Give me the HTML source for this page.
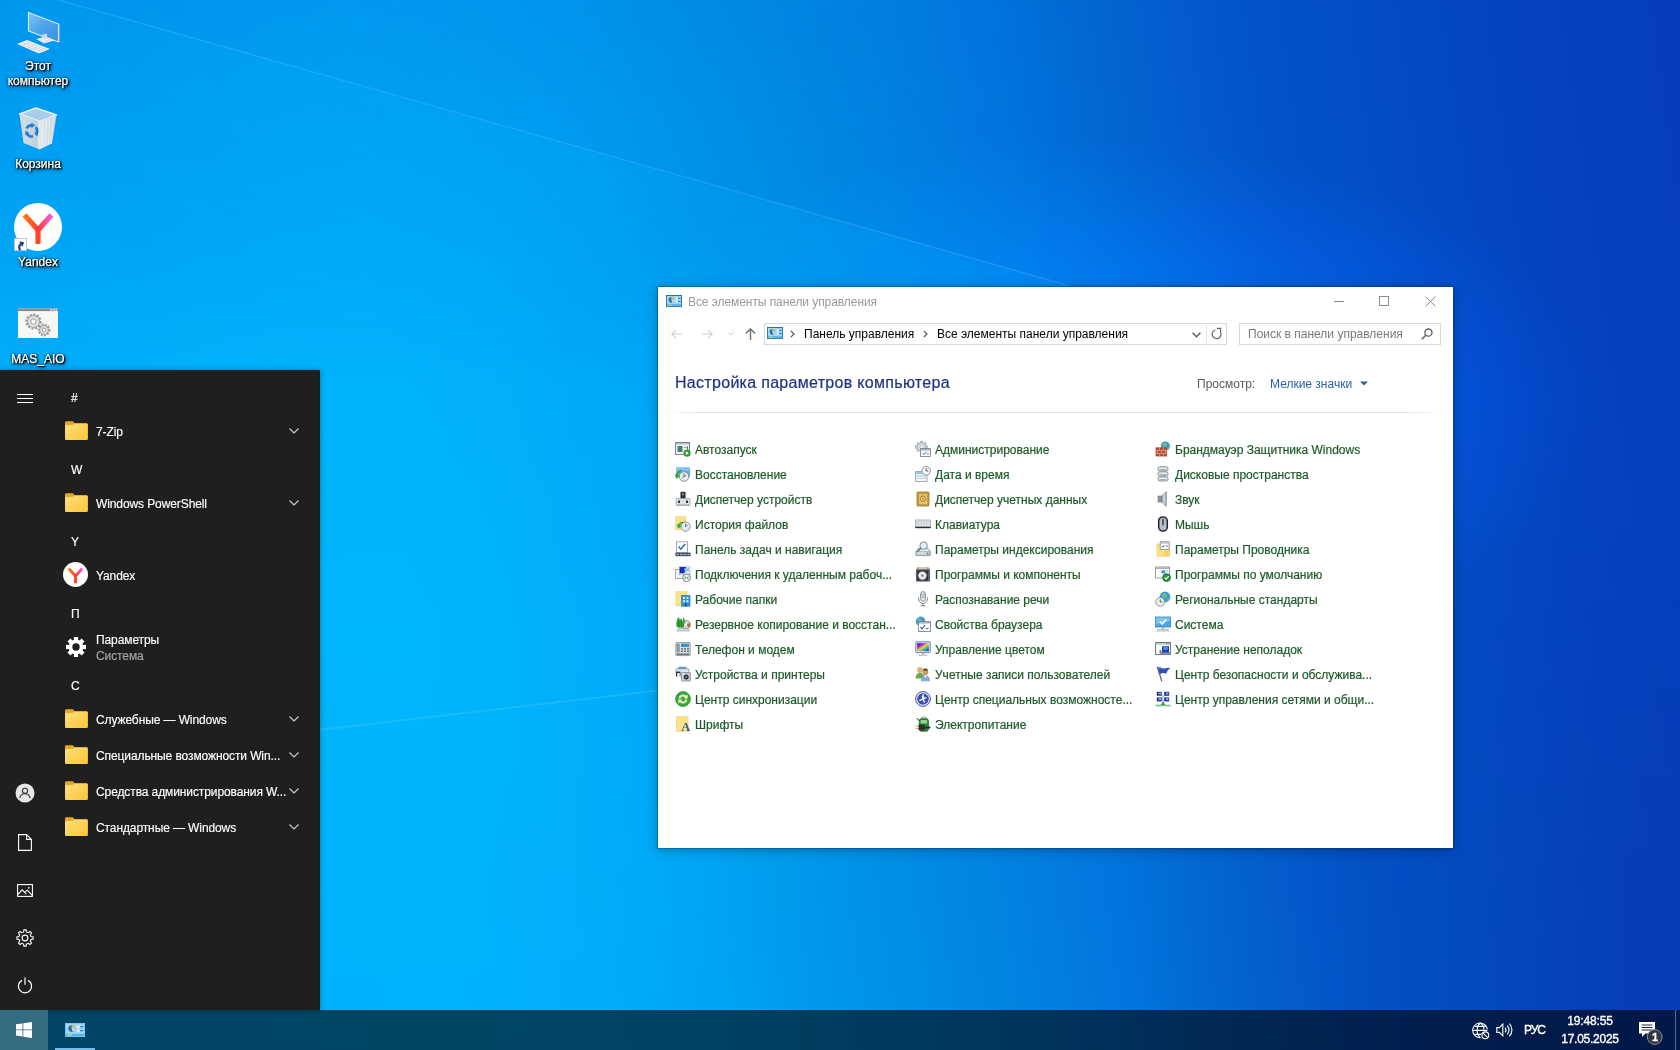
<!DOCTYPE html>
<html lang="ru">
<head>
<meta charset="utf-8">
<title>Все элементы панели управления</title>
<style>
*{box-sizing:border-box;margin:0;padding:0}
html,body{width:1680px;height:1050px;overflow:hidden}
body{position:relative;font-family:"Liberation Sans",sans-serif;font-size:12px;color:#fff;background:#0a86e4}
.abs{position:absolute}
#wall{position:absolute;left:0;top:0;width:1680px;height:1050px}
/* desktop icons */
.dlabel{position:absolute;left:0;width:76px;text-align:center;font-size:12px;line-height:15px;color:#fff;letter-spacing:0;
 -webkit-text-stroke:0.25px #fff;text-shadow:1px 1px 1px rgba(0,0,0,1),1px 1px 2px rgba(0,0,0,.95),0 0 3px rgba(0,0,0,.8),1px 2px 4px rgba(0,0,0,.7)}
/* start menu */
#start{position:absolute;left:0;top:370px;width:320px;height:640px;background:#1f1f1f;border-top:1px solid #04202f;border-right:1px solid #04202f;box-shadow:0 0 5px rgba(0,0,0,.35)}
.hdr{position:absolute;left:71px;width:30px;font-size:12px;line-height:14px;color:#fff;-webkit-text-stroke:0.15px #fff}
.app{position:absolute;left:96px;font-size:12px;line-height:14px;color:#fff;white-space:nowrap;letter-spacing:-0.1px;-webkit-text-stroke:0.15px currentColor}
.sub{color:#a6a6a6}
.fold{position:absolute;left:65px;width:23px;height:19px}
.chev{position:absolute;left:289px;width:10px;height:6px}
.rail{position:absolute}
/* taskbar */
#task{position:absolute;left:0;top:1010px;width:1680px;height:40px;background:rgba(0,0,0,.6)}
#startbtn{position:absolute;left:0;top:0;width:48px;height:40px;background:#346c82}
.tray{position:absolute;color:#fff;font-size:12px;line-height:14px;white-space:nowrap;-webkit-text-stroke:0.35px #fff}
/* window */
#win{position:absolute;left:658px;top:287px;width:795px;height:561px;background:#fff;color:#000;
 box-shadow:0 0 0 1px rgba(10,50,110,.30),0 2px 12px rgba(0,0,0,.28),0 0 4px rgba(0,0,0,.15)}
#win .t{position:absolute;white-space:nowrap;font-size:12px;line-height:14px}
.item{position:absolute;white-space:nowrap;font-size:12px;line-height:14px;color:#1e5a28;-webkit-text-stroke:0.2px #1e5a28}
.ic{position:absolute;width:16px;height:16px}
</style>
</head>
<body>
<svg id="wall" width="1680" height="1050" viewBox="0 0 1680 1050">
<defs>
<linearGradient id="wg" gradientUnits="userSpaceOnUse" x1="0" y1="0" x2="1647.2" y2="-232.3">
<stop offset="0.0000" stop-color="#00aefa"/>
<stop offset="0.0179" stop-color="#00aefa"/>
<stop offset="0.0357" stop-color="#00affa"/>
<stop offset="0.0536" stop-color="#00affa"/>
<stop offset="0.0714" stop-color="#00affa"/>
<stop offset="0.0893" stop-color="#00b0fa"/>
<stop offset="0.1071" stop-color="#00b0fb"/>
<stop offset="0.1250" stop-color="#00b0fb"/>
<stop offset="0.1429" stop-color="#00b1fb"/>
<stop offset="0.1607" stop-color="#00b1fb"/>
<stop offset="0.1786" stop-color="#00b1fb"/>
<stop offset="0.1964" stop-color="#00b1fb"/>
<stop offset="0.2143" stop-color="#00b0fb"/>
<stop offset="0.2321" stop-color="#00affa"/>
<stop offset="0.2500" stop-color="#00aefa"/>
<stop offset="0.2679" stop-color="#00adf9"/>
<stop offset="0.2857" stop-color="#00abf8"/>
<stop offset="0.3036" stop-color="#00a9f8"/>
<stop offset="0.3214" stop-color="#00a7f7"/>
<stop offset="0.3393" stop-color="#00a5f5"/>
<stop offset="0.3571" stop-color="#00a2f2"/>
<stop offset="0.3750" stop-color="#009eef"/>
<stop offset="0.3929" stop-color="#009bec"/>
<stop offset="0.4107" stop-color="#0097eb"/>
<stop offset="0.4286" stop-color="#0094e9"/>
<stop offset="0.4464" stop-color="#0091e7"/>
<stop offset="0.4643" stop-color="#008ee6"/>
<stop offset="0.4821" stop-color="#018ae4"/>
<stop offset="0.5000" stop-color="#0187e3"/>
<stop offset="0.5179" stop-color="#0184e2"/>
<stop offset="0.5357" stop-color="#0180e1"/>
<stop offset="0.5536" stop-color="#027ce0"/>
<stop offset="0.5714" stop-color="#0278df"/>
<stop offset="0.5893" stop-color="#0275dd"/>
<stop offset="0.6071" stop-color="#0270da"/>
<stop offset="0.6250" stop-color="#026cd6"/>
<stop offset="0.6429" stop-color="#0268d3"/>
<stop offset="0.6607" stop-color="#0264d1"/>
<stop offset="0.6786" stop-color="#0360cf"/>
<stop offset="0.6964" stop-color="#035cce"/>
<stop offset="0.7143" stop-color="#0358cc"/>
<stop offset="0.7321" stop-color="#0355ca"/>
<stop offset="0.7500" stop-color="#0352c8"/>
<stop offset="0.7679" stop-color="#0350c7"/>
<stop offset="0.7857" stop-color="#034fc6"/>
<stop offset="0.8036" stop-color="#044dc5"/>
<stop offset="0.8214" stop-color="#044bc4"/>
<stop offset="0.8393" stop-color="#0449c3"/>
<stop offset="0.8571" stop-color="#0447c2"/>
<stop offset="0.8750" stop-color="#0445c0"/>
<stop offset="0.8929" stop-color="#0443bf"/>
<stop offset="0.9107" stop-color="#0442be"/>
<stop offset="0.9286" stop-color="#0441bd"/>
<stop offset="0.9464" stop-color="#0440bd"/>
<stop offset="0.9643" stop-color="#043fbc"/>
<stop offset="0.9821" stop-color="#043ebb"/>
<stop offset="1.0000" stop-color="#043dba"/>
</linearGradient>
<linearGradient id="wd" gradientUnits="userSpaceOnUse" x1="0" y1="0" x2="0" y2="380">
<stop offset="0" stop-color="#0058d0" stop-opacity="0.30"/>
<stop offset="1" stop-color="#0058d0" stop-opacity="0"/>
</linearGradient>
<linearGradient id="mh" gradientUnits="userSpaceOnUse" x1="0" y1="0" x2="1068" y2="0">
<stop offset="0" stop-color="#fff"/><stop offset="0.55" stop-color="#aaa"/><stop offset="1" stop-color="#000"/>
</linearGradient>
<mask id="mwd" maskUnits="userSpaceOnUse" x="0" y="0" width="1680" height="1050"><rect width="1680" height="1050" fill="url(#mh)"/></mask>
<radialGradient id="wh" gradientUnits="userSpaceOnUse" cx="380" cy="640" r="420" gradientTransform="translate(380 640) scale(1.3 1) translate(-380 -640)">
<stop offset="0" stop-color="#00c8ff" stop-opacity="0.22"/>
<stop offset="1" stop-color="#00c8ff" stop-opacity="0"/>
</radialGradient>
<radialGradient id="wb" gradientUnits="userSpaceOnUse" cx="1680" cy="1050" r="560"><stop offset="0" stop-color="#001878" stop-opacity="0.14"/><stop offset="1" stop-color="#001878" stop-opacity="0"/></radialGradient>
<linearGradient id="wl" gradientUnits="userSpaceOnUse" x1="53" y1="0" x2="1068" y2="287">
<stop offset="0" stop-color="#30c0ff" stop-opacity="0.40"/>
<stop offset="1" stop-color="#30a8ff" stop-opacity="0.50"/>
</linearGradient>
<radialGradient id="glow" gradientUnits="userSpaceOnUse" cx="1080" cy="400" r="260" gradientTransform="translate(1080 400) scale(2 1) translate(-1080 -400)">
<stop offset="0" stop-color="#0028f0"/><stop offset="0.25" stop-color="#0020c8"/><stop offset="0.5" stop-color="#001585"/><stop offset="0.75" stop-color="#000a41"/><stop offset="1" stop-color="#000000"/>
</radialGradient>
<linearGradient id="bm" gradientUnits="userSpaceOnUse" x1="100" y1="0" x2="1068" y2="0">
<stop offset="0" stop-color="#000610"/><stop offset="1" stop-color="#001040"/>
</linearGradient>
<linearGradient id="bmm" gradientUnits="userSpaceOnUse" x1="420" y1="104" x2="363" y2="304">
<stop offset="0" stop-color="#fff"/><stop offset="1" stop-color="#000"/>
</linearGradient>
<mask id="mbm" maskUnits="userSpaceOnUse" x="0" y="0" width="1680" height="1050"><rect width="1680" height="1050" fill="url(#bmm)"/></mask>
</defs>
<rect width="1680" height="1050" fill="url(#wg)"/>
<rect width="1680" height="1050" fill="url(#wh)"/>
<rect x="1000" y="400" width="680" height="650" fill="url(#wb)"/>
<rect width="1680" height="1050" fill="url(#glow)" style="mix-blend-mode:screen"/>
<g mask="url(#mbm)" style="mix-blend-mode:screen"><polygon points="0,0 53,0 1068,287 1068,600 0,600" fill="url(#bm)"/></g>
<g mask="url(#mwd)"><rect width="1100" height="380" fill="url(#wd)"/><polygon points="0,0 53,0 1068,287 1068,0" fill="#0058d0" fill-opacity="0.045"/></g>
<path d="M53 -1.500L1068 285.500" stroke="url(#wl)" stroke-width="1.600"/>
<path d="M0 767L658 690.500" stroke="#9fe4ff" stroke-opacity="0.16" stroke-width="2"/>
</svg>
<div id="desk">
<!-- Этот компьютер -->
<svg class="abs" style="left:14px;top:8px" width="48" height="48" viewBox="0 0 48 48">
<defs><linearGradient id="scr" x1="0" y1="0" x2="1" y2="1"><stop offset="0" stop-color="#7cc4f5"/><stop offset="0.5" stop-color="#4aa3ec"/><stop offset="1" stop-color="#3b8fe0"/></linearGradient></defs>
<polygon points="14.5,4.5 44.5,16 44.5,34 14.5,23" fill="url(#scr)" stroke="#d8ecfb" stroke-width="1.2" stroke-linejoin="round"/>
<polygon points="44.5,16 45.5,16.6 45.5,34.6 44.5,34" fill="#b9c6d2"/>
<polygon points="22,31 32,28.5 41,32.5 30,35.5" fill="#e4e8ec"/>
<polygon points="27,27 33,25.5 33,29.5 28,30.5" fill="#cfd6dc"/>
<polygon points="3,36 13,32 36,41 25,45.5" fill="#eef1f4"/>
<path d="M6 36.2 L27 44 M9 35 L30 43 M12 33.8 L33 41.8 M9 37.3 L15 34.6 M14 39.2 L20 36.6 M19 41 L25 38.5 M24 43 L30 40.4" stroke="#c7d0d8" stroke-width="0.7" fill="none"/>
</svg>
<div class="dlabel" style="top:59px">Этот<br>компьютер</div>
<!-- Корзина -->
<svg class="abs" style="left:14px;top:104px" width="48" height="48" viewBox="0 0 48 48">
<defs><linearGradient id="bin" x1="0" y1="0" x2="1" y2="0"><stop offset="0" stop-color="#d3dee7"/><stop offset="0.48" stop-color="#c2cfda"/><stop offset="0.52" stop-color="#e2e9ef"/><stop offset="1" stop-color="#c9d5de"/></linearGradient></defs>
<polygon points="5.5,10 22,4 42.5,11 26,17.5" fill="#a9cde8" stroke="#e6f0f7" stroke-width="1.4" stroke-linejoin="round"/>
<polygon points="5.5,10.5 26,18 42.5,11.5 38,39.500 25.500,45.500 9.500,39" fill="url(#bin)"/>
<path d="M29 17.2L28.2 44M32.5 15.8L31.200 42.600M36 14.400L34.200 41.200M39.400 13L37 40" stroke="#fff" stroke-opacity="0.35" stroke-width="1.1"/>
<g fill="none" stroke="#1f7fd6" stroke-width="2.600">
<path d="M12.600 24.600a5.400 5.400 0 0 1 5.600 -3.200"/>
<path d="M21.800 23.200a5.400 5.400 0 0 1 0.600 6.200"/>
<path d="M19 32.400a5.400 5.400 0 0 1 -6 -3.200"/>
</g>
<g fill="#1f7fd6"><path d="M17.400 18.600l4 2.800l-4 2.400z"/><path d="M24.600 27.800l-1.200 4.600l-3.400 -3.200z"/><path d="M11 31.200l0.600 -4.800l3.800 2.600z"/></g>
</svg>
<div class="dlabel" style="top:157px">Корзина</div>
<!-- Yandex -->
<svg class="abs" style="left:14px;top:203px" width="48" height="48" viewBox="0 0 48 48">
<defs><linearGradient id="ya" x1="0" y1="0" x2="1" y2="0"><stop offset="0" stop-color="#ff7a1a"/><stop offset="0.5" stop-color="#ff3d2e"/><stop offset="1" stop-color="#ff5ad8"/></linearGradient>
<linearGradient id="yb" x1="0" y1="0" x2="0" y2="1"><stop offset="0" stop-color="#ff3a3a"/><stop offset="1" stop-color="#ff4a22"/></linearGradient></defs>
<circle cx="24" cy="24" r="24" fill="#fff"/>
<path d="M10.5 12 L24 27 L37.5 12" fill="none" stroke="url(#ya)" stroke-width="5.2" stroke-linejoin="miter"/>
<rect x="21.4" y="24" width="5.2" height="17" rx="1.2" fill="url(#yb)"/>
<rect x="0.5" y="35.5" width="12" height="12" fill="#fff" stroke="#b8c4d4" stroke-width="1"/>
<path d="M3 46.4C2.800 42.400 4.800 40.400 7.400 40.200L7.400 38L11.400 41.200L7.400 44.400L7.400 42.400C5.800 42.600 5.200 43.800 5.200 46.400z" fill="#24408f" transform="rotate(-28 7 42.500)"/>
</svg>
<div class="dlabel" style="top:255px">Yandex</div>
<!-- MAS_AIO -->
<svg class="abs" style="left:14px;top:300px" width="48" height="48" viewBox="0 0 48 48">
<rect x="4" y="8.5" width="40" height="29.5" fill="#f7f7f7"/>
<rect x="4" y="8.5" width="40" height="2.6" fill="#8c8c8c"/>
<rect x="36.3" y="9.2" width="1.6" height="1.2" fill="#fff"/><rect x="38.9" y="9.2" width="1.6" height="1.2" fill="#fff"/><rect x="41.5" y="9.2" width="1.6" height="1.2" fill="#fff"/>
<g fill="#e0e0e0" stroke="#9a9a9a" stroke-width="0.9">
<circle cx="19.5" cy="21.5" r="7" stroke-dasharray="2.2 1.4" stroke-width="2.2" fill="none"/>
<circle cx="19.5" cy="21.5" r="6" />
<circle cx="19.5" cy="21.5" r="2.6" fill="#fff"/>
<circle cx="30" cy="30" r="5.4" stroke-dasharray="1.9 1.3" stroke-width="2" fill="none"/>
<circle cx="30" cy="30" r="4.4"/>
<circle cx="30" cy="30" r="1.8" fill="#fff"/>
</g>
</svg>
<div class="dlabel" style="top:352px">MAS_AIO</div>
</div>
<div id="win">
<svg class="abs" style="left:8px;top:8px" width="16" height="12" viewBox="0 0 20 14" preserveAspectRatio="none"><rect x="0.5" y="0.5" width="19" height="13" fill="#9fd8fb" stroke="#1d5d8f" stroke-width="1"/><rect x="1" y="10.8" width="18" height="2.4" fill="#4db4ec"/><circle cx="6.6" cy="5.6" r="3.3" fill="#2a6fb8"/><path d="M6.6 5.6 L6.6 2.3 A3.3 3.3 0 0 1 9.9 5.6z" fill="#f4c430"/><path d="M6.6 5.6 L9.9 5.6 A3.3 3.3 0 0 1 8 8.6z" fill="#e8eef2"/><rect x="12.2" y="2.6" width="2.4" height="2.4" fill="#e9f6ff"/><rect x="15.2" y="3.2" width="3" height="1.2" fill="#1f6fb5"/><rect x="12.2" y="6.4" width="2.4" height="2.4" fill="#e9f6ff"/><rect x="15.2" y="7" width="3" height="1.2" fill="#1f6fb5"/><rect x="2.4" y="11.4" width="5" height="1.2" fill="#f0d060"/></svg>
<div class="t" style="left:30px;top:8px;color:#999;letter-spacing:-0.07px">Все элементы панели управления</div>
<div class="abs" style="left:676px;top:14px;width:10px;height:1px;background:#8a8a8a"></div>
<div class="abs" style="left:721px;top:9px;width:10px;height:10px;border:1px solid #8a8a8a"></div>
<svg class="abs" style="left:767px;top:9px" width="11" height="11" viewBox="0 0 11 11"><path d="M0.5 0.5L10.5 10.5M10.5 0.5L0.5 10.5" stroke="#8a8a8a" stroke-width="1"/></svg>
<svg class="abs" style="left:13px;top:42px" width="12" height="10" viewBox="0 0 12 10"><path d="M11.5 5H1M5 0.8L0.8 5L5 9.2" fill="none" stroke="#d0d0d0" stroke-width="1.2"/></svg>
<svg class="abs" style="left:43px;top:42px" width="12" height="10" viewBox="0 0 12 10"><path d="M0.5 5H11M7 0.8L11.2 5L7 9.2" fill="none" stroke="#d0d0d0" stroke-width="1.2"/></svg>
<svg class="abs" style="left:70px;top:45px" width="6" height="4" viewBox="0 0 6 4"><path d="M0.5 0.5L3 3L5.5 0.5" fill="none" stroke="#c8c8c8" stroke-width="1"/></svg>
<svg class="abs" style="left:87px;top:41px" width="11" height="12" viewBox="0 0 11 12"><path d="M5.5 12V1M0.8 5.6L5.5 0.9L10.2 5.6" fill="none" stroke="#707070" stroke-width="1.4"/></svg>
<div class="abs" style="left:106px;top:36px;width:463px;height:22px;border:1px solid #d9d9d9"></div>
<div class="abs" style="left:548px;top:36px;width:1px;height:22px;background:#e3e3e3"></div>
<svg class="abs" style="left:109px;top:40px" width="16" height="12" viewBox="0 0 20 14" preserveAspectRatio="none"><rect x="0.5" y="0.5" width="19" height="13" fill="#9fd8fb" stroke="#1d5d8f" stroke-width="1"/><rect x="1" y="10.8" width="18" height="2.4" fill="#4db4ec"/><circle cx="6.6" cy="5.6" r="3.3" fill="#2a6fb8"/><path d="M6.6 5.6 L6.6 2.3 A3.3 3.3 0 0 1 9.9 5.6z" fill="#f4c430"/><path d="M6.6 5.6 L9.9 5.6 A3.3 3.3 0 0 1 8 8.6z" fill="#e8eef2"/><rect x="12.2" y="2.6" width="2.4" height="2.4" fill="#e9f6ff"/><rect x="15.2" y="3.2" width="3" height="1.2" fill="#1f6fb5"/><rect x="12.2" y="6.4" width="2.4" height="2.4" fill="#e9f6ff"/><rect x="15.2" y="7" width="3" height="1.2" fill="#1f6fb5"/><rect x="2.4" y="11.4" width="5" height="1.2" fill="#f0d060"/></svg>
<svg class="abs" style="left:132px;top:43px" width="5" height="8" viewBox="0 0 5 8"><path d="M0.8 0.8L4 4L0.8 7.2" fill="none" stroke="#555" stroke-width="1.2"/></svg>
<div class="t" style="left:146px;top:40px;color:#000">Панель управления</div>
<svg class="abs" style="left:265px;top:43px" width="5" height="8" viewBox="0 0 5 8"><path d="M0.8 0.8L4 4L0.8 7.2" fill="none" stroke="#555" stroke-width="1.2"/></svg>
<div class="t" style="left:279px;top:40px;color:#000">Все элементы панели управления</div>
<svg class="abs" style="left:534px;top:45px" width="9" height="6" viewBox="0 0 9 6"><path d="M0.6 0.8L4.5 4.8L8.4 0.8" fill="none" stroke="#555" stroke-width="1.4"/></svg>
<svg class="abs" style="left:553px;top:40px" width="12" height="13" viewBox="0 0 12 13"><path d="M9.400 5A4.400 4.400 0 1 1 4.300 3" fill="none" stroke="#666" stroke-width="1.200"/><path d="M5.800 1.400H9.600V5.200" fill="none" stroke="#666" stroke-width="1.200"/></svg>
<div class="abs" style="left:581px;top:36px;width:202px;height:22px;border:1px solid #d9d9d9"></div>
<div class="t" style="left:590px;top:40px;color:#7a7a7a">Поиск в панели управления</div>
<svg class="abs" style="left:763px;top:41px" width="12" height="12" viewBox="0 0 12 12"><circle cx="7.4" cy="4.6" r="3.6" fill="none" stroke="#666" stroke-width="1.3"/><path d="M4.8 7.2L0.8 11.2" stroke="#666" stroke-width="1.6"/></svg>
<div class="t" style="left:17px;top:86px;color:#1e3287;font-size:16px;line-height:20px;letter-spacing:0.3px;-webkit-text-stroke:0.2px #1e3287">Настройка параметров компьютера</div>
<div class="t" style="left:539px;top:90px;color:#5a5a5a">Просмотр:</div>
<div class="t" style="left:612px;top:90px;color:#2a62a8">Мелкие значки</div>
<svg class="abs" style="left:702px;top:94px" width="8" height="5" viewBox="0 0 8 5"><path d="M0 0.4H8L4 4.6z" fill="#2a62a8"/></svg>
<div class="abs" style="left:12px;top:125px;width:772px;height:1px;background:linear-gradient(to right,#fff,#e0e5e8 3%,#e0e5e8 96%,#fff)"></div>
<svg class="ic" style="left:17px;top:154px" viewBox="0 0 16 16"><rect x="0.5" y="1.5" width="14" height="12" fill="#f4f6f7" stroke="#7b8790"/><rect x="1" y="2" width="13" height="1.6" fill="#b9c2c9"/><rect x="2.5" y="5" width="5" height="6" fill="#3f7f78"/><rect x="8.8" y="6" width="3.6" height="1" fill="#9aa5ad"/><rect x="12" y="5" width="1" height="4" fill="#6d7a83"/><circle cx="12" cy="12.2" r="3.6" fill="#2e9e2e"/><path d="M10.9 10.3L13.8 12.2L10.9 14.1z" fill="#fff"/></svg><div class="item" style="left:37px;top:156px">Автозапуск</div>
<svg class="ic" style="left:17px;top:179px" viewBox="0 0 16 16"><path d="M1 1.5h14v9.5h-3l-3 -1h-8z" fill="#5bb0ea"/><path d="M1 1.5h14v3L1 7z" fill="#7cc3f2"/><circle cx="9" cy="10.5" r="4.8" fill="#e6eaee" stroke="#7d8790" stroke-width="0.9"/><path d="M9 7.5v3l2 -1.6M9 10.5l-1.6 1.2" stroke="#4a545c" stroke-width="0.8" fill="none"/><path d="M1 8.5c0.6 -3.2 3.4 -4.8 6.2 -4.4l-1.4 2.2c-1.6 0.2 -2.6 1.4 -2.8 3.2l2 0.2l-3.2 3.2l-2.4 -4.2z" fill="#37a537"/></svg><div class="item" style="left:37px;top:181px">Восстановление</div>
<svg class="ic" style="left:17px;top:204px" viewBox="0 0 16 16"><rect x="5.5" y="0.8" width="5" height="7" fill="#2b2f33"/><rect x="7.2" y="2" width="1.6" height="2.4" fill="#8d969c"/><rect x="1" y="7.5" width="14" height="7" rx="0.8" fill="#dfe2e4" stroke="#9aa1a6" stroke-width="0.8"/><rect x="3" y="9.6" width="2" height="2.4" fill="#2b2f33"/><rect x="11" y="9.6" width="2" height="2.4" fill="#2b2f33"/><rect x="1.4" y="13" width="13.2" height="1.2" fill="#b7bdc1"/></svg><div class="item" style="left:37px;top:206px">Диспетчер устройств</div>
<svg class="ic" style="left:17px;top:229px" viewBox="0 0 16 16"><rect x="0.8" y="0.8" width="10" height="13" fill="#fbe38a" stroke="#e9c95a" stroke-width="0.6"/><circle cx="10.6" cy="10.6" r="4.6" fill="#e9edf0" stroke="#7d8790" stroke-width="0.9"/><path d="M10.6 7.6v3l2 -1.4" stroke="#4a545c" stroke-width="0.8" fill="none"/><path d="M3.6 8.2c1.2 -2.2 3.4 -2.8 5.2 -2.4l-1.2 1.8c-1.2 0 -2 0.6 -2.4 1.8l1.6 0.6l-3.6 2.4l-1.4 -4z" fill="#37a537"/></svg><div class="item" style="left:37px;top:231px">История файлов</div>
<svg class="ic" style="left:17px;top:254px" viewBox="0 0 16 16"><rect x="1.6" y="0.8" width="11" height="11" fill="#fdfdfd" stroke="#8f989f" stroke-width="0.8"/><path d="M3.6 5.6l2.2 2.6l4.4 -5.2" stroke="#2d6fb4" stroke-width="1.5" fill="none"/><rect x="0.4" y="11.6" width="15.2" height="3.6" fill="#3a4652"/><rect x="1.4" y="12.8" width="2.6" height="1.4" fill="#9fb3c6"/><rect x="5" y="12.8" width="2.6" height="1.4" fill="#9fb3c6"/><rect x="8.6" y="12.8" width="2.6" height="1.4" fill="#9fb3c6"/><rect x="12.2" y="12.8" width="2.6" height="1.4" fill="#9fb3c6"/></svg><div class="item" style="left:37px;top:256px">Панель задач и навигация</div>
<svg class="ic" style="left:17px;top:279px" viewBox="0 0 16 16"><rect x="0.6" y="3.4" width="9" height="9" fill="#f1f4f6" stroke="#8f989f" stroke-width="0.8"/><rect x="4.4" y="0.8" width="10.6" height="8" fill="#dbe8f3" stroke="#9fb0bf" stroke-width="0.6"/><path d="M4.6 1h6.4v3.6l-2 2.6h-4.4z" fill="#1b2fb0"/><rect x="9.4" y="2.2" width="4.6" height="3" fill="#8cc0ef"/><circle cx="11.6" cy="11.8" r="3.9" fill="#eef1f3" stroke="#6f7a83" stroke-width="0.9"/><path d="M9.6 10.6l1.6 1.2l-1.6 1.2M13.6 10.6l-1.6 1.2l1.6 1.2" stroke="#2e9e2e" stroke-width="0.9" fill="none"/></svg><div class="item" style="left:37px;top:281px">Подключения к удаленным рабоч...</div>
<svg class="ic" style="left:17px;top:304px" viewBox="0 0 16 16"><rect x="1" y="0.8" width="11" height="14" fill="#fbe38a" stroke="#e9c95a" stroke-width="0.6"/><rect x="6.6" y="4.6" width="8.4" height="10.6" fill="#2f93d6" stroke="#1f6fa8" stroke-width="0.6"/><rect x="8" y="6" width="2" height="2" fill="#d9f0ff"/><rect x="11.4" y="6" width="2" height="2" fill="#d9f0ff"/><rect x="8" y="9.2" width="2" height="2" fill="#d9f0ff"/><rect x="11.4" y="9.2" width="2" height="2" fill="#d9f0ff"/><rect x="9.8" y="12.4" width="2" height="2.8" fill="#17507c"/></svg><div class="item" style="left:37px;top:306px">Рабочие папки</div>
<svg class="ic" style="left:17px;top:329px" viewBox="0 0 16 16"><path d="M3.4 12.4h9.6l1.6 2.6h-12.6z" fill="#d7dbde" stroke="#8c959b" stroke-width="0.6"/><circle cx="11" cy="8.6" r="4.4" fill="#cfd4d8" stroke="#7f8990" stroke-width="0.7"/><path d="M11 8.6L15 7A4.4 4.4 0 0 1 14 11.8z" fill="#b56a3c"/><circle cx="11" cy="8.6" r="1.1" fill="#fff"/><path d="M1.2 9.6c0 -4 1 -6.600 2.200 -8.800l1.600 3.200l1 -2l1.400 3.400l1.200 -4.400l1.400 4.200c-0.400 2.400 -1 4.200 -1.400 6.400h-6z" fill="#3aa03a"/><path d="M3.400 4.200l0.800 7M6.400 4l0.200 7.400" stroke="#1f7a1f" stroke-width="0.9"/></svg><div class="item" style="left:37px;top:331px">Резервное копирование и восстан...</div>
<svg class="ic" style="left:17px;top:354px" viewBox="0 0 16 16"><rect x="0.8" y="1.6" width="14.4" height="13" rx="1" fill="#dfe3e6" stroke="#7f8990" stroke-width="0.8"/><rect x="1.6" y="2.4" width="3.2" height="9" rx="1" fill="#8d979e"/><rect x="6" y="2.6" width="8" height="3.4" fill="#3f8fc4"/><g fill="#5a646b"><rect x="6" y="7.2" width="2" height="1.4"/><rect x="9" y="7.2" width="2" height="1.4"/><rect x="12" y="7.2" width="2" height="1.4"/><rect x="6" y="9.6" width="2" height="1.4"/><rect x="9" y="9.6" width="2" height="1.4"/><rect x="12" y="9.6" width="2" height="1.4"/></g><rect x="1.6" y="12.4" width="12.800" height="1.6" fill="#6d777e"/></svg><div class="item" style="left:37px;top:356px">Телефон и модем</div>
<svg class="ic" style="left:17px;top:379px" viewBox="0 0 16 16"><rect x="3.4" y="0.8" width="8" height="3" fill="#4a9ad4"/><rect x="1" y="2.8" width="13" height="5" rx="0.6" fill="#e4e7e9" stroke="#7f8990" stroke-width="0.7"/><rect x="1" y="5.6" width="4.4" height="5" fill="#2b2f33"/><rect x="2.2" y="7" width="2.6" height="4.4" fill="#f1f3f4"/><rect x="6.4" y="6.6" width="9" height="8.400" rx="0.6" fill="#c9ced2" stroke="#6f7a83" stroke-width="0.7"/><circle cx="11.2" cy="11" r="2.5" fill="#2b2f33"/><circle cx="11.2" cy="11" r="1" fill="#8d979e"/><rect x="7.4" y="7.4" width="2" height="1.2" fill="#fff"/></svg><div class="item" style="left:37px;top:381px">Устройства и принтеры</div>
<svg class="ic" style="left:17px;top:404px" viewBox="0 0 16 16"><circle cx="8" cy="8" r="7.4" fill="#3aa83a"/><circle cx="8" cy="8" r="7.4" fill="none" stroke="#2a8a2a" stroke-width="0.8"/><path d="M3.6 7.400a4.500 4.500 0 0 1 7.600 -2.600l1.400 -1.200v4h-4l1.400 -1.400a2.800 2.800 0 0 0 -4.600 1.200z" fill="#f5f7c8"/><path d="M12.400 8.600a4.500 4.500 0 0 1 -7.600 2.600l-1.400 1.200v-4h4l-1.400 1.400a2.800 2.800 0 0 0 4.600 -1.200z" fill="#f5f7c8"/></svg><div class="item" style="left:37px;top:406px">Центр синхронизации</div>
<svg class="ic" style="left:17px;top:429px" viewBox="0 0 16 16"><rect x="1.6" y="0.8" width="11.4" height="14.4" fill="#fbe38a" stroke="#e9c95a" stroke-width="0.6"/><text x="6.200" y="15.400" font-family="Liberation Serif,serif" font-size="12.500" font-weight="bold" fill="#1f5f8c">A</text></svg><div class="item" style="left:37px;top:431px">Шрифты</div>
<svg class="ic" style="left:257px;top:154px" viewBox="0 0 16 16"><g transform="translate(6.600 6)"><g fill="#c9ced2" stroke="#8f989f" stroke-width="0.5"><rect x="-1.2" y="-6" width="2.4" height="3" transform="rotate(0)"/><rect x="-1.2" y="-6" width="2.4" height="3" transform="rotate(45)"/><rect x="-1.2" y="-6" width="2.4" height="3" transform="rotate(90)"/><rect x="-1.2" y="-6" width="2.4" height="3" transform="rotate(135)"/><rect x="-1.2" y="-6" width="2.4" height="3" transform="rotate(180)"/><rect x="-1.2" y="-6" width="2.4" height="3" transform="rotate(225)"/><rect x="-1.2" y="-6" width="2.4" height="3" transform="rotate(270)"/><rect x="-1.2" y="-6" width="2.4" height="3" transform="rotate(315)"/></g><circle r="4.2" fill="#dde1e4" stroke="#8f989f" stroke-width="0.6"/><circle r="1.600" fill="#fff" stroke="#8f989f" stroke-width="0.5"/></g><rect x="5.400" y="7.600" width="10" height="7.800" fill="#fbfcfc" stroke="#6f7a83" stroke-width="0.8"/><rect x="5.800" y="8" width="9.200" height="1.600" fill="#aab3ba"/><path d="M7.600 12l1.400 1.400l2.400 -2.600" stroke="#2d6fb4" stroke-width="1" fill="none"/><rect x="12" y="12.600" width="2" height="0.800" fill="#2d6fb4"/></svg><div class="item" style="left:277px;top:156px">Администрирование</div>
<svg class="ic" style="left:257px;top:179px" viewBox="0 0 16 16"><rect x="0.600" y="5.600" width="11.400" height="9.800" fill="#f6f8f9" stroke="#8f989f" stroke-width="0.8"/><rect x="1" y="6" width="10.600" height="2.200" fill="#9fc4e4"/><g fill="#a8c8e2"><rect x="2" y="9.200" width="1.600" height="1.400"/><rect x="4.400" y="9.200" width="1.600" height="1.400"/><rect x="6.800" y="9.200" width="1.600" height="1.400"/><rect x="9.200" y="9.200" width="1.600" height="1.400"/><rect x="2" y="11.600" width="1.600" height="1.400"/><rect x="4.400" y="11.600" width="1.600" height="1.400"/><rect x="6.800" y="11.600" width="1.600" height="1.400"/><rect x="9.200" y="11.600" width="1.600" height="1.400"/></g><circle cx="11.200" cy="4.800" r="4.300" fill="#f3f5f6" stroke="#7f8990" stroke-width="0.9"/><path d="M11.200 2.200v2.800h2.200" stroke="#4a545c" stroke-width="0.9" fill="none"/></svg><div class="item" style="left:277px;top:181px">Дата и время</div>
<svg class="ic" style="left:257px;top:204px" viewBox="0 0 16 16"><rect x="2" y="1" width="12" height="14" rx="0.800" fill="#c9a040" stroke="#9a7624" stroke-width="0.8"/><rect x="3.400" y="2.400" width="9.200" height="11.200" fill="#e2bf62" stroke="#b08a30" stroke-width="0.5"/><circle cx="8" cy="7.600" r="2.600" fill="#f0d88e" stroke="#8a6a20" stroke-width="0.8"/><circle cx="8" cy="7.600" r="0.900" fill="#8a6a20"/><rect x="10.800" y="11.400" width="1.200" height="1.200" fill="#f6e6a8"/></svg><div class="item" style="left:277px;top:206px">Диспетчер учетных данных</div>
<svg class="ic" style="left:257px;top:229px" viewBox="0 0 16 16"><rect x="0.400" y="4" width="15.200" height="7.600" fill="#eceff1" stroke="#8f989f" stroke-width="0.7"/><g stroke="#9aa3aa" stroke-width="0.7"><path d="M1.400 5.600h13.200M1.400 7.200h13.200M1.400 8.800h13.200" stroke-dasharray="1 0.600"/></g><rect x="0.400" y="10.600" width="15.200" height="1.600" fill="#2b2f33"/></svg><div class="item" style="left:277px;top:231px">Клавиатура</div>
<svg class="ic" style="left:257px;top:254px" viewBox="0 0 16 16"><path d="M1 10.200l2.600 -3h9l2.600 3v4.400h-14.200z" fill="#e4e7e9" stroke="#6f7a83" stroke-width="0.8"/><rect x="1.400" y="10.600" width="13.200" height="3.600" fill="#d3d8dc" stroke="#8f989f" stroke-width="0.5"/><rect x="11.600" y="11.800" width="1.800" height="1.400" fill="#4a7a3a"/><circle cx="8.600" cy="4.600" r="3.700" fill="#dfeefa" stroke="#7f8c98" stroke-width="1"/><path d="M5.800 7.200l-3.400 3.600" stroke="#6f7a83" stroke-width="1.600"/></svg><div class="item" style="left:277px;top:256px">Параметры индексирования</div>
<svg class="ic" style="left:257px;top:279px" viewBox="0 0 16 16"><path d="M2.400 1h11l1.600 2.400v12h-14v-12z" fill="#b9a48c"/><rect x="4" y="1" width="8" height="2.400" fill="#d8c8b2"/><rect x="1" y="3.400" width="14" height="12" fill="#5a6067"/><rect x="2" y="4.400" width="11" height="10.200" fill="#33383d"/><circle cx="7.400" cy="9.600" r="4.200" fill="#e6e9eb"/><circle cx="7.400" cy="9.600" r="1.200" fill="#6f7a83"/></svg><div class="item" style="left:277px;top:281px">Программы и компоненты</div>
<svg class="ic" style="left:257px;top:304px" viewBox="0 0 16 16"><rect x="5.600" y="0.600" width="4.800" height="9.600" rx="2.400" fill="#e9ecee" stroke="#6f7a83" stroke-width="0.8"/><path d="M5.800 3.200h4.400M5.800 4.800h4.400M5.800 6.400h4.400" stroke="#8f989f" stroke-width="0.7"/><path d="M3.600 6.400v1.600a4.400 4.400 0 0 0 8.800 0v-1.600" fill="none" stroke="#6f7a83" stroke-width="0.9"/><path d="M8 12.400v2M5.600 14.800h4.800" stroke="#6f7a83" stroke-width="1"/></svg><div class="item" style="left:277px;top:306px">Распознавание речи</div>
<svg class="ic" style="left:257px;top:329px" viewBox="0 0 16 16"><circle cx="5.600" cy="5.400" r="4.800" fill="#3f9ad8"/><path d="M2.400 3.200c1.400 -1.600 3 -1 3.600 0.200c0.600 1.400 -1 2.400 -2.200 2.200z" fill="#6cc46c"/><path d="M5.600 0.600a4.800 4.800 0 0 0 -4 2.200" stroke="#bfe2f8" stroke-width="0.8" fill="none"/><rect x="3.400" y="5.600" width="12" height="9.800" fill="#fbfcfc" stroke="#6f7a83" stroke-width="0.8"/><rect x="3.800" y="6" width="11.200" height="1.600" fill="#aab3ba"/><path d="M5.400 11l1.600 1.800l3 -3.400" stroke="#2d5fb4" stroke-width="1.100" fill="none"/><rect x="11" y="12" width="2.600" height="0.900" fill="#2d5fb4"/></svg><div class="item" style="left:277px;top:331px">Свойства браузера</div>
<svg class="ic" style="left:257px;top:354px" viewBox="0 0 16 16"><defs><linearGradient id="cm" x1="0" y1="0" x2="1" y2="1"><stop offset="0" stop-color="#2818a8"/><stop offset="0.300" stop-color="#a030c0"/><stop offset="0.500" stop-color="#f0d040"/><stop offset="0.700" stop-color="#40b8a0"/><stop offset="1" stop-color="#1828a0"/></linearGradient></defs><rect x="0.800" y="0.800" width="14.400" height="10.800" rx="0.600" fill="#dfe3f2" stroke="#5a5fb0" stroke-width="0.8"/><rect x="2.200" y="2.200" width="11.600" height="8" fill="url(#cm)"/><rect x="6.600" y="11.600" width="2.800" height="2" fill="#aab3ba"/><rect x="3.600" y="13.600" width="8.800" height="1.400" rx="0.600" fill="#c3c9ce"/></svg><div class="item" style="left:277px;top:356px">Управление цветом</div>
<svg class="ic" style="left:257px;top:379px" viewBox="0 0 16 16"><circle cx="5" cy="4" r="2.900" fill="#d9b478"/><path d="M0.600 12.400c0 -3.600 1.800 -5.400 4.400 -5.400s4.400 1.800 4.400 5.400z" fill="#6aa84a"/><circle cx="10.400" cy="6.200" r="2.900" fill="#c89a68"/><path d="M8 3.600c1 -1.400 4 -1.400 4.800 0.200l-0.400 1.200c-1.400 -0.800 -3 -0.800 -4 -0.200z" fill="#5a3a20"/><path d="M5.800 15.200c0 -3.800 2 -5.600 4.600 -5.600s4.600 1.800 4.600 5.600z" fill="#8aa8d0"/><path d="M9.400 10l1 2l1 -2z" fill="#fff"/></svg><div class="item" style="left:277px;top:381px">Учетные записи пользователей</div>
<svg class="ic" style="left:257px;top:404px" viewBox="0 0 16 16"><circle cx="8" cy="8" r="7.400" fill="#e8eaf6" stroke="#4a54a8" stroke-width="1"/><circle cx="8" cy="8" r="5.800" fill="#3f4fb0"/><path d="M8 3.200v4.400M8 7.800l3.400 -1.200M8 7.800l-3.600 1.800M8 7.800l1.600 3.600" stroke="#fff" stroke-width="1.300" fill="none"/><path d="M6.400 5.400L8 7.400L9.600 5.400z" fill="#fff"/></svg><div class="item" style="left:277px;top:406px">Центр специальных возможносте...</div>
<svg class="ic" style="left:257px;top:429px" viewBox="0 0 16 16"><rect x="6.200" y="1" width="5" height="2.400" rx="1" fill="#e9ecee" stroke="#6f7a83" stroke-width="0.6"/><rect x="4.400" y="2.800" width="9" height="12.400" rx="2" fill="#2e8f2e" stroke="#1d5f1d" stroke-width="0.8"/><rect x="5.600" y="4" width="6.600" height="3.400" rx="1" fill="#8fd48f"/><path d="M1.600 2l3 3" stroke="#2b2f33" stroke-width="1"/><rect x="0.600" y="9.600" width="3.400" height="1" fill="#d9b040"/><rect x="0.600" y="12" width="3.400" height="1" fill="#d9b040"/><path d="M3.600 8.600h4.200a2.800 2.800 0 0 1 0 5.600h-4.200z" fill="#2b2f33"/><rect x="10.600" y="10.400" width="5" height="2.200" rx="1" fill="#2b2f33"/></svg><div class="item" style="left:277px;top:431px">Электропитание</div>
<svg class="ic" style="left:497px;top:154px" viewBox="0 0 16 16"><circle cx="10.400" cy="5" r="4.600" fill="#3f9ad8"/><path d="M7.600 3.200c1.600 -2 3.600 -1.200 4.200 0c0.600 1.600 -1.200 3 -2.800 2.600z" fill="#6cc46c"/><path d="M12.600 6.400c1 -0.400 2 0.400 1.600 1.600l-1.400 0.800z" fill="#6cc46c"/><rect x="0.600" y="6.400" width="11.400" height="9" fill="#b5452c"/><g stroke="#e8c4a8" stroke-width="0.6"><path d="M0.600 9.400h11.400M0.600 12.400h11.400M4.400 6.400v3M8.400 6.400v3M2.400 9.400v3M6.400 9.400v3M10.400 9.400v3M4.400 12.400v3M8.400 12.400v3"/></g></svg><div class="item" style="left:517px;top:156px">Брандмауэр Защитника Windows</div>
<svg class="ic" style="left:497px;top:179px" viewBox="0 0 16 16"><g fill="#e6e9eb" stroke="#6f7a83" stroke-width="0.8"><rect x="3" y="0.800" width="10" height="4.200" rx="1.800"/><rect x="3" y="5.800" width="10" height="4.200" rx="1.800"/><rect x="3" y="10.800" width="10" height="4.200" rx="1.800"/></g><g fill="#9aa3aa"><rect x="4.600" y="3.200" width="6.800" height="1"/><rect x="4.600" y="8.200" width="6.800" height="1"/><rect x="4.600" y="13.200" width="6.800" height="1"/></g></svg><div class="item" style="left:517px;top:181px">Дисковые пространства</div>
<svg class="ic" style="left:497px;top:204px" viewBox="0 0 16 16"><defs><linearGradient id="sp" x1="0" y1="0" x2="1" y2="0"><stop offset="0" stop-color="#6f7a83"/><stop offset="0.500" stop-color="#dfe3e6"/><stop offset="1" stop-color="#8f989f"/></linearGradient></defs><rect x="3" y="5" width="3.400" height="6" fill="#8f989f" stroke="#5a646b" stroke-width="0.5"/><path d="M6.400 5l5 -4.400v14.800l-5 -4.400z" fill="url(#sp)" stroke="#6f7a83" stroke-width="0.5"/></svg><div class="item" style="left:517px;top:206px">Звук</div>
<svg class="ic" style="left:497px;top:229px" viewBox="0 0 16 16"><rect x="3.600" y="0.800" width="8.800" height="14.400" rx="4.200" fill="#8f9ba8" stroke="#1f2328" stroke-width="1.300"/><rect x="5" y="2.200" width="6" height="11.600" rx="3" fill="#b7c2cd"/><rect x="7.300" y="3" width="1.400" height="6.400" rx="0.600" fill="#2b3138"/></svg><div class="item" style="left:517px;top:231px">Мышь</div>
<svg class="ic" style="left:497px;top:254px" viewBox="0 0 16 16"><rect x="2" y="3" width="12.600" height="12.200" fill="#fbdf80" stroke="#e9c95a" stroke-width="0.6"/><rect x="9.400" y="9.800" width="5.200" height="5.400" fill="#f6d060"/><rect x="5.200" y="0.800" width="9" height="7.600" fill="#fbfcfc" stroke="#7f8990" stroke-width="0.8"/><rect x="5.600" y="1.200" width="8.200" height="1.300" fill="#aab3ba"/><path d="M6.800 5l1 1.200l1.800 -2" stroke="#2d5fb4" stroke-width="0.9" fill="none"/><rect x="10.600" y="4.600" width="2.400" height="0.800" fill="#2d5fb4"/></svg><div class="item" style="left:517px;top:256px">Параметры Проводника</div>
<svg class="ic" style="left:497px;top:279px" viewBox="0 0 16 16"><rect x="0.600" y="1" width="14" height="11" fill="#fbfcfc" stroke="#7f8990" stroke-width="0.8"/><rect x="1" y="1.400" width="13.200" height="1.600" fill="#aab3ba"/><rect x="6.400" y="4.400" width="4" height="3" fill="#3f8fd4"/><rect x="11.200" y="4.600" width="2" height="0.800" fill="#9aa3aa"/><circle cx="11.600" cy="11.600" r="3.900" fill="#1f9a3a" stroke="#1d5f2a" stroke-width="0.8"/><path d="M9.600 11.600l1.500 1.600l2.600 -3" stroke="#fff" stroke-width="1.200" fill="none"/></svg><div class="item" style="left:517px;top:281px">Программы по умолчанию</div>
<svg class="ic" style="left:497px;top:304px" viewBox="0 0 16 16"><circle cx="10" cy="6" r="5.400" fill="#3f9ad8"/><path d="M6.800 4c1.600 -2.400 4.200 -1.600 4.800 0c0.600 1.800 -1.400 3.200 -3.200 2.800z" fill="#6cc46c"/><path d="M12.400 7.200c1.200 -0.400 2.200 0.400 1.800 1.800l-1.600 1z" fill="#6cc46c"/><circle cx="5.200" cy="10.800" r="4.400" fill="#eef0f2" stroke="#7f8990" stroke-width="0.9"/><path d="M5.200 8.200v2.800h2.200" stroke="#4a545c" stroke-width="0.9" fill="none"/></svg><div class="item" style="left:517px;top:306px">Региональные стандарты</div>
<svg class="ic" style="left:497px;top:329px" viewBox="0 0 16 16"><rect x="0.600" y="1" width="14.800" height="10" fill="#4aa8ea" stroke="#2d7fc4" stroke-width="0.8"/><path d="M1 1.400h14v3.600l-14 3z" fill="#7cc4f4"/><path d="M5 5.600l2.200 2.400l4 -4.600" stroke="#fff" stroke-width="1.500" fill="none"/><rect x="6.800" y="11" width="2.400" height="2.200" fill="#aab3ba"/><rect x="2" y="13.400" width="12" height="1" fill="#8f989f"/><rect x="0.600" y="15" width="14.800" height="0.600" fill="#c3c9ce"/></svg><div class="item" style="left:517px;top:331px">Система</div>
<svg class="ic" style="left:497px;top:354px" viewBox="0 0 16 16"><rect x="0.600" y="1.600" width="14.800" height="12" fill="#fbfcfc" stroke="#5a646b" stroke-width="0.9"/><rect x="1" y="2" width="14" height="1.800" fill="#c3c9ce"/><rect x="11" y="2.400" width="1" height="0.800" fill="#5a646b"/><rect x="12.600" y="2.400" width="1" height="0.800" fill="#5a646b"/><rect x="4.600" y="9" width="1.600" height="3.600" fill="#6f7a83"/><rect x="7" y="5.200" width="7" height="6" fill="#1f3fb0"/><rect x="8.400" y="6" width="4.200" height="3" fill="#5a8fe0"/><rect x="6.200" y="11.200" width="8.600" height="1.400" fill="#3a4a8a"/></svg><div class="item" style="left:517px;top:356px">Устранение неполадок</div>
<svg class="ic" style="left:497px;top:379px" viewBox="0 0 16 16"><path d="M2.200 0.800l4.600 14.400" stroke="#5a646b" stroke-width="1.200"/><path d="M2.800 1.600c3 -1.400 4.600 1 7 0.800c2 -0.200 3.600 -1 5.400 -0.200c-2 1.200 -3.400 3.200 -4 5.600c-2 -1 -4.400 -1 -6.200 0.600z" fill="#2f4fb0"/><path d="M3.200 2.200c2.400 -0.800 4 0.800 6 0.800" stroke="#7f9fe4" stroke-width="0.8" fill="none"/></svg><div class="item" style="left:517px;top:381px">Центр безопасности и обслужива...</div>
<svg class="ic" style="left:497px;top:404px" viewBox="0 0 16 16"><g fill="#1f2fa8"><rect x="1.800" y="0.800" width="5" height="4"/><rect x="9.200" y="0.800" width="5" height="4"/><rect x="1.800" y="6.400" width="5" height="4"/><rect x="9.200" y="6.400" width="5" height="4"/></g><g fill="#8fb4f0"><rect x="3.600" y="1.600" width="2.400" height="1.800"/><rect x="11" y="1.600" width="2.400" height="1.800"/><rect x="3.600" y="7.200" width="2.400" height="1.800"/><rect x="11" y="7.200" width="2.400" height="1.800"/></g><path d="M8 4v9" stroke="#6f7a83" stroke-width="0.8"/><path d="M5.600 14l2.400 -3.400l2.400 3.400z" fill="#2e9e4e"/><rect x="0.600" y="13.800" width="14.800" height="1.400" fill="#2e9e4e"/><rect x="0.600" y="14.200" width="14.800" height="0.500" fill="#bfe8c8"/></svg><div class="item" style="left:517px;top:406px">Центр управления сетями и общи...</div>
</div>
<div id="start">
<div class="hdr" style="top:20px">#</div>
<div class="hdr" style="top:92px">W</div>
<div class="hdr" style="top:164px">Y</div>
<div class="hdr" style="top:236px">П</div>
<div class="hdr" style="top:308px">С</div>
<svg class="fold" style="top:50px" viewBox="0 0 23 19"><defs><linearGradient id="fg0" x1="0" y1="0" x2="1" y2="1"><stop offset="0" stop-color="#ffe082"/><stop offset="1" stop-color="#fcc434"/></linearGradient></defs><path d="M1.2 0.3h6.6l2.4 2.5h11.2a1.3 1.3 0 0 1 1.3 1.3v13.3a1.3 1.3 0 0 1 -1.3 1.3h-20.2a1.3 1.3 0 0 1 -1.2 -1.3v-15.8a1.3 1.3 0 0 1 1.2 -1.3z" fill="#e8a91e"/><path d="M0 5.2a1.3 1.3 0 0 1 1.3 -1.3h6.4l2.3 -1.6h11.5a1.3 1.3 0 0 1 1.3 1.3v14.1a1.3 1.3 0 0 1 -1.3 1.3h-20.2a1.3 1.3 0 0 1 -1.3 -1.3z" fill="url(#fg0)"/></svg>
<div class="app" style="top:54px">7-Zip</div>
<svg class="chev" style="top:57px" viewBox="0 0 10 6"><path d="M0.5 0.5 L5 5 L9.5 0.5" fill="none" stroke="#d0d0d0" stroke-width="1.1"/></svg>
<svg class="fold" style="top:122px" viewBox="0 0 23 19"><defs><linearGradient id="fg1" x1="0" y1="0" x2="1" y2="1"><stop offset="0" stop-color="#ffe082"/><stop offset="1" stop-color="#fcc434"/></linearGradient></defs><path d="M1.2 0.3h6.6l2.4 2.5h11.2a1.3 1.3 0 0 1 1.3 1.3v13.3a1.3 1.3 0 0 1 -1.3 1.3h-20.2a1.3 1.3 0 0 1 -1.2 -1.3v-15.8a1.3 1.3 0 0 1 1.2 -1.3z" fill="#e8a91e"/><path d="M0 5.2a1.3 1.3 0 0 1 1.3 -1.3h6.4l2.3 -1.6h11.5a1.3 1.3 0 0 1 1.3 1.3v14.1a1.3 1.3 0 0 1 -1.3 1.3h-20.2a1.3 1.3 0 0 1 -1.3 -1.3z" fill="url(#fg1)"/></svg>
<div class="app" style="top:126px">Windows PowerShell</div>
<svg class="chev" style="top:129px" viewBox="0 0 10 6"><path d="M0.5 0.5 L5 5 L9.5 0.5" fill="none" stroke="#d0d0d0" stroke-width="1.1"/></svg>
<svg class="fold" style="top:338px" viewBox="0 0 23 19"><defs><linearGradient id="fg2" x1="0" y1="0" x2="1" y2="1"><stop offset="0" stop-color="#ffe082"/><stop offset="1" stop-color="#fcc434"/></linearGradient></defs><path d="M1.2 0.3h6.6l2.4 2.5h11.2a1.3 1.3 0 0 1 1.3 1.3v13.3a1.3 1.3 0 0 1 -1.3 1.3h-20.2a1.3 1.3 0 0 1 -1.2 -1.3v-15.8a1.3 1.3 0 0 1 1.2 -1.3z" fill="#e8a91e"/><path d="M0 5.2a1.3 1.3 0 0 1 1.3 -1.3h6.4l2.3 -1.6h11.5a1.3 1.3 0 0 1 1.3 1.3v14.1a1.3 1.3 0 0 1 -1.3 1.3h-20.2a1.3 1.3 0 0 1 -1.3 -1.3z" fill="url(#fg2)"/></svg>
<div class="app" style="top:342px">Служебные — Windows</div>
<svg class="chev" style="top:345px" viewBox="0 0 10 6"><path d="M0.5 0.5 L5 5 L9.5 0.5" fill="none" stroke="#d0d0d0" stroke-width="1.1"/></svg>
<svg class="fold" style="top:374px" viewBox="0 0 23 19"><defs><linearGradient id="fg3" x1="0" y1="0" x2="1" y2="1"><stop offset="0" stop-color="#ffe082"/><stop offset="1" stop-color="#fcc434"/></linearGradient></defs><path d="M1.2 0.3h6.6l2.4 2.5h11.2a1.3 1.3 0 0 1 1.3 1.3v13.3a1.3 1.3 0 0 1 -1.3 1.3h-20.2a1.3 1.3 0 0 1 -1.2 -1.3v-15.8a1.3 1.3 0 0 1 1.2 -1.3z" fill="#e8a91e"/><path d="M0 5.2a1.3 1.3 0 0 1 1.3 -1.3h6.4l2.3 -1.6h11.5a1.3 1.3 0 0 1 1.3 1.3v14.1a1.3 1.3 0 0 1 -1.3 1.3h-20.2a1.3 1.3 0 0 1 -1.3 -1.3z" fill="url(#fg3)"/></svg>
<div class="app" style="top:378px">Специальные возможности Win...</div>
<svg class="chev" style="top:381px" viewBox="0 0 10 6"><path d="M0.5 0.5 L5 5 L9.5 0.5" fill="none" stroke="#d0d0d0" stroke-width="1.1"/></svg>
<svg class="fold" style="top:410px" viewBox="0 0 23 19"><defs><linearGradient id="fg4" x1="0" y1="0" x2="1" y2="1"><stop offset="0" stop-color="#ffe082"/><stop offset="1" stop-color="#fcc434"/></linearGradient></defs><path d="M1.2 0.3h6.6l2.4 2.5h11.2a1.3 1.3 0 0 1 1.3 1.3v13.3a1.3 1.3 0 0 1 -1.3 1.3h-20.2a1.3 1.3 0 0 1 -1.2 -1.3v-15.8a1.3 1.3 0 0 1 1.2 -1.3z" fill="#e8a91e"/><path d="M0 5.2a1.3 1.3 0 0 1 1.3 -1.3h6.4l2.3 -1.6h11.5a1.3 1.3 0 0 1 1.3 1.3v14.1a1.3 1.3 0 0 1 -1.3 1.3h-20.2a1.3 1.3 0 0 1 -1.3 -1.3z" fill="url(#fg4)"/></svg>
<div class="app" style="top:414px">Средства администрирования W...</div>
<svg class="chev" style="top:417px" viewBox="0 0 10 6"><path d="M0.5 0.5 L5 5 L9.5 0.5" fill="none" stroke="#d0d0d0" stroke-width="1.1"/></svg>
<svg class="fold" style="top:446px" viewBox="0 0 23 19"><defs><linearGradient id="fg5" x1="0" y1="0" x2="1" y2="1"><stop offset="0" stop-color="#ffe082"/><stop offset="1" stop-color="#fcc434"/></linearGradient></defs><path d="M1.2 0.3h6.6l2.4 2.5h11.2a1.3 1.3 0 0 1 1.3 1.3v13.3a1.3 1.3 0 0 1 -1.3 1.3h-20.2a1.3 1.3 0 0 1 -1.2 -1.3v-15.8a1.3 1.3 0 0 1 1.2 -1.3z" fill="#e8a91e"/><path d="M0 5.2a1.3 1.3 0 0 1 1.3 -1.3h6.4l2.3 -1.6h11.5a1.3 1.3 0 0 1 1.3 1.3v14.1a1.3 1.3 0 0 1 -1.3 1.3h-20.2a1.3 1.3 0 0 1 -1.3 -1.3z" fill="url(#fg5)"/></svg>
<div class="app" style="top:450px">Стандартные — Windows</div>
<svg class="chev" style="top:453px" viewBox="0 0 10 6"><path d="M0.5 0.5 L5 5 L9.5 0.5" fill="none" stroke="#d0d0d0" stroke-width="1.1"/></svg>
<svg class="abs" style="left:63px;top:191px" width="25" height="25" viewBox="0 0 48 48"><circle cx="24" cy="24" r="24" fill="#fff"/><path d="M11 12.5 L24 27 L37 12.5" fill="none" stroke="url(#ya)" stroke-width="5.6"/><rect x="21.2" y="24" width="5.6" height="17" rx="1.2" fill="url(#yb)"/></svg>
<div class="app" style="top:198px">Yandex</div>
<svg class="abs" style="left:65px;top:265px" width="22" height="22" viewBox="0 0 22 22"><g transform="translate(11 11)"><g fill="#fff"><rect x="-2.1" y="-10" width="4.2" height="5" transform="rotate(0)"/><rect x="-2.1" y="-10" width="4.2" height="5" transform="rotate(45)"/><rect x="-2.1" y="-10" width="4.2" height="5" transform="rotate(90)"/><rect x="-2.1" y="-10" width="4.2" height="5" transform="rotate(135)"/><rect x="-2.1" y="-10" width="4.2" height="5" transform="rotate(180)"/><rect x="-2.1" y="-10" width="4.2" height="5" transform="rotate(225)"/><rect x="-2.1" y="-10" width="4.2" height="5" transform="rotate(270)"/><rect x="-2.1" y="-10" width="4.2" height="5" transform="rotate(315)"/></g><circle r="7.4" fill="#fff"/><circle r="3.7" fill="#1f1f1f"/></g></svg>
<div class="app" style="top:262px">Параметры</div>
<div class="app sub" style="top:278px">Система</div>
<div class="abs" style="left:17px;top:23px;width:16px;height:1px;background:#fff"></div>
<div class="abs" style="left:17px;top:27px;width:16px;height:1px;background:#fff"></div>
<div class="abs" style="left:17px;top:31px;width:16px;height:1px;background:#fff"></div>
<svg class="abs" style="left:15px;top:412px" width="20" height="20" viewBox="0 0 20 20"><circle cx="10" cy="10" r="9.5" fill="#e6e6e6"/><circle cx="10" cy="7.8" r="2.6" fill="none" stroke="#333" stroke-width="1.1"/><path d="M4.8 15.2c0.6-3 2.6-4.4 5.2-4.4s4.6 1.4 5.2 4.4" fill="none" stroke="#333" stroke-width="1.1"/></svg>
<svg class="abs" style="left:18px;top:463px" width="14" height="17" viewBox="0 0 14 17"><path d="M0.6 0.6h8l4.8 4.8v11h-12.8z M8.6 0.6v4.8h4.8" fill="none" stroke="#fff" stroke-width="1.1"/></svg>
<svg class="abs" style="left:17px;top:513px" width="16" height="13" viewBox="0 0 17 13" preserveAspectRatio="none"><rect x="0.6" y="0.6" width="15.8" height="11.8" fill="none" stroke="#fff" stroke-width="1.1"/><path d="M0.8 10.5l4.7-4.7 4.4 4.4 M8.2 8.6l2.6-2.6 5.4 5.4" fill="none" stroke="#fff" stroke-width="1.1"/><circle cx="12.6" cy="3.8" r="0.9" fill="#fff"/></svg>
<svg class="abs" style="left:16px;top:558px" width="18" height="18" viewBox="0 0 18 18"><g transform="translate(9 9)" fill="none" stroke="#fff" stroke-width="1.1"><path d="M6.03 -1.45 L8.13 -1.09 L8.13 1.09 L6.03 1.45 L5.29 3.24 L6.52 4.97 L4.97 6.52 L3.24 5.29 L1.45 6.03 L1.09 8.13 L-1.09 8.13 L-1.45 6.03 L-3.24 5.29 L-4.97 6.52 L-6.52 4.97 L-5.29 3.24 L-6.03 1.45 L-8.13 1.09 L-8.13 -1.09 L-6.03 -1.45 L-5.29 -3.24 L-6.52 -4.97 L-4.97 -6.52 L-3.24 -5.29 L-1.45 -6.03 L-1.09 -8.13 L1.09 -8.13 L1.45 -6.03 L3.24 -5.29 L4.97 -6.52 L6.52 -4.97 L5.29 -3.24Z"/><circle r="2.9"/></g></svg>
<svg class="abs" style="left:17px;top:606px" width="16" height="17" viewBox="0 0 16 17"><path d="M4.9 3.4a6.6 6.6 0 1 0 6.2 0" fill="none" stroke="#fff" stroke-width="1.2"/><path d="M8 0.4v7.4" stroke="#fff" stroke-width="1.2"/></svg>
</div>
<div id="task">
<div id="startbtn"></div>
<svg class="abs" style="left:16px;top:12px" width="16" height="16" viewBox="0 0 16 16"><path d="M0 2.3 L6.5 1.4 V7.5 H0z M7.3 1.3 L16 0 V7.5 H7.3z M0 8.3 H6.5 V14.5 L0 13.6z M7.3 8.3 H16 V16 L7.3 14.7z" fill="#fff"/></svg>
<svg class="abs" style="left:65px;top:13px" width="20" height="14" viewBox="0 0 20 14" preserveAspectRatio="none"><rect x="0.5" y="0.5" width="19" height="13" fill="#9fd8fb" stroke="#7cc6f6" stroke-width="1"/><rect x="1" y="10.8" width="18" height="2.4" fill="#4db4ec"/><circle cx="6.6" cy="5.6" r="3.3" fill="#2a6fb8"/><path d="M6.6 5.6 L6.6 2.3 A3.3 3.3 0 0 1 9.9 5.6z" fill="#f4c430"/><path d="M6.6 5.6 L9.9 5.6 A3.3 3.3 0 0 1 8 8.6z" fill="#e8eef2"/><rect x="12.2" y="2.6" width="2.4" height="2.4" fill="#e9f6ff"/><rect x="15.2" y="3.2" width="3" height="1.2" fill="#1f6fb5"/><rect x="12.2" y="6.4" width="2.4" height="2.4" fill="#e9f6ff"/><rect x="15.2" y="7" width="3" height="1.2" fill="#1f6fb5"/><rect x="2.4" y="11.4" width="5" height="1.2" fill="#f0d060"/></svg>
<div class="abs" style="left:55px;top:38px;width:40px;height:2px;background:#76b9ed"></div>
<svg class="abs" style="left:1472px;top:12px" width="18" height="18" viewBox="0 0 18 18"><g fill="none" stroke="#fff" stroke-width="1.1"><path d="M15.4 7.2a7.4 7.4 0 1 0 -7 8.6"/><path d="M1.2 8.4h14.2 M2.6 4.4h11 M2.4 12.4h7"/><path d="M8.4 1c-4.4 3.6-4.4 11 0 14.8"/><path d="M8.4 1c2.6 2 3.6 4.6 3.6 6.6"/><circle cx="13.3" cy="13.3" r="3.4"/><path d="M10.9 10.9l4.8 4.8"/></g></svg>
<svg class="abs" style="left:1496px;top:12px" width="18" height="16" viewBox="0 0 18 16"><g fill="none" stroke="#fff" stroke-width="1.1"><path d="M0.8 5.6h2.6l3.4-3.4v11.6l-3.4-3.4h-2.6z"/><path d="M9 5.6c1.2 1.4 1.2 3.4 0 4.8"/><path d="M11.2 3.6c2.2 2.6 2.2 6.2 0 8.8"/><path d="M13.4 1.6c3.4 3.8 3.4 9 0 12.8"/></g></svg>
<div class="tray" style="left:1524px;top:13px;letter-spacing:-1px">РУС</div>
<div class="tray" style="left:1540px;top:4px;width:100px;text-align:center;letter-spacing:-0.15px">19:48:55</div>
<div class="tray" style="left:1540px;top:22px;width:100px;text-align:center;letter-spacing:-0.25px">17.05.2025</div>
<svg class="abs" style="left:1639px;top:12px" width="24" height="24" viewBox="0 0 24 24"><path d="M0 0h16v11.6h-9.6l-3.4 3.4v-3.4h-3z" fill="#fff"/><path d="M2.600 3h10.800 M2.600 5.500h10.800 M2.600 8h10.800" stroke="#1a2438" stroke-width="1"/><circle cx="15.7" cy="15" r="7.4" fill="#2f3542" stroke="#8a90a0" stroke-width="1"/></svg>
<div class="tray" style="left:1648px;top:20px;width:14px;text-align:center;font-size:11px;font-weight:bold">1</div>
<div class="abs" style="left:1675px;top:0;width:1px;height:40px;background:#5a6a8c"></div>
</div>
</body>
</html>
